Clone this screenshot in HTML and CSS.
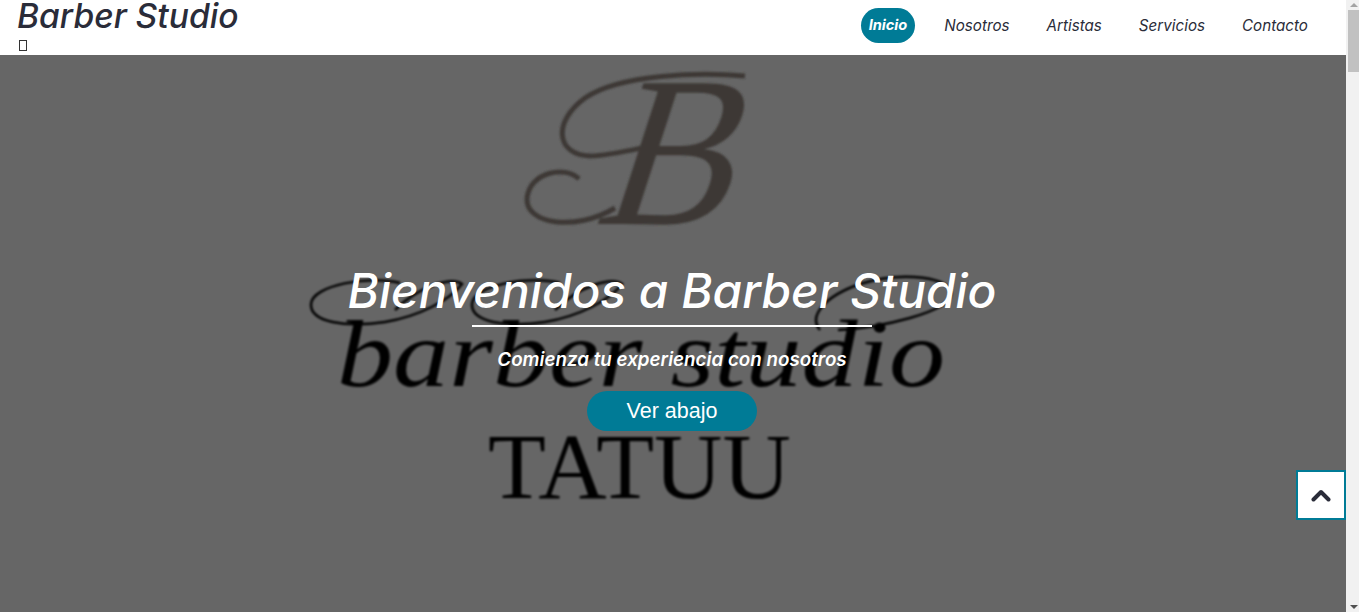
FILE: index.html
```html
<!DOCTYPE html>
<html lang="es">
<head>
    <meta charset="UTF-8" />
    <meta name="viewport" content="width=device-width, initial-scale=1.0" />
    <title>Barber Studio</title>
    <link rel="stylesheet" href="styles.css">
</head>
<body>
    <div class="page">
        <div class="navbar">
            <div class="brand">
                <h1>Barber Studio</h1>
                <span class="missing-icon"></span>
            </div>
            <ul class="menu">
                <li><a class="active" href="#inicio">Inicio</a></li>
                <li><a href="#nosotros">Nosotros</a></li>
                <li><a href="#artistas">Artistas</a></li>
                <li><a href="#servicios">Servicios</a></li>
                <li><a href="#contacto">Contacto</a></li>
            </ul>
        </div>

        <div class="hero" id="inicio">
            <!-- logo del estudio, detras del texto -->
            <svg class="hero-logo" width="1346" height="557" viewBox="0 55 1346 557">
                <defs>
                    <filter id="soft"><feGaussianBlur stdDeviation="0.8" /></filter>
                </defs>
                <g filter="url(#soft)">
                    <text class="logo-b" transform="translate(592 224) skewX(-18)" textLength="135" lengthAdjust="spacingAndGlyphs">B</text>
                    <path class="swash-b" d="M745 76C700 72 620 74 585 98C552 122 556 155 590 156C606 156 632 150 646 147" />
                    <path class="swash-b" d="M579 179C565 165 530 172 527 198C525 224 575 232 615 208" />
                    <g class="swash">
                        <path d="M400 283C370 275 312 285 311 304C310 322 345 328 385 322C420 316 450 300 462 284C452 277 420 285 395 310" />
                        <path d="M560 283C530 275 473 285 472 304C471 322 505 328 545 322C580 316 610 300 622 284C612 277 580 285 555 310" />
                        <path d="M838 330C880 328 950 312 951 294C952 278 905 270 860 284C825 296 808 316 820 330" />
                    </g>
                    <text class="logo-name" x="337" y="386" textLength="608" lengthAdjust="spacingAndGlyphs">barber studio</text>
                    <text class="logo-sub" x="488" y="498" textLength="303" lengthAdjust="spacingAndGlyphs">TATUU</text>
                </g>
            </svg>

            <div class="hero-content">
                <h2>Bienvenidos a Barber Studio</h2>
                <div class="hero-line"></div>
                <p>Comienza tu experiencia con nosotros</p>
                <a class="hero-button" href="#nosotros">Ver abajo</a>
            </div>

            <a class="to-top" href="#inicio">
                <svg width="20" height="13" viewBox="0 0 20 13">
                    <path d="M2.5 10.5L10 3l7.5 7.5" />
                </svg>
            </a>
        </div>
    </div>

    <div class="scrollbar">
        <span class="arrow-up"></span>
        <div class="thumb"></div>
        <span class="arrow-down"></span>
    </div>
</body>
</html>
```

FILE: styles.css
```css
* {
    box-sizing: border-box;
    margin: 0;
    padding: 0;
}

html,
body {
    height: 100%;
    overflow: hidden;
}

body {
    display: flex;
    font-family: "Inter", "Liberation Sans", sans-serif;
    font-style: italic;
    color: #2a2c39;
    background: #fff;
}

.page {
    flex-grow: 1;
    display: flex;
    flex-direction: column;
    min-width: 0;
}

.navbar {
    height: 55px;
    flex-shrink: 0;
    display: flex;
    justify-content: space-between;
    align-items: flex-start;
    padding: 0 30px 0 17px;
    background: #fff;
}

.brand h1 {
    font-size: 33.6px;
    font-weight: 500;
    line-height: 32px;
}

.missing-icon {
    display: block;
    width: 8px;
    height: 11px;
    margin: 8px 0 0 2px;
    border: 1px solid #333;
}

.menu {
    display: flex;
    gap: 21px;
    list-style: none;
    margin-top: 8px;
}

.menu a {
    display: block;
    height: 35px;
    padding: 0 8px;
    line-height: 35px;
    font-size: 15.2px;
    color: #2a2c39;
    text-decoration: none;
}

.menu a.active {
    background: #007b96;
    border-radius: 18px;
    color: #fff;
    font-size: 14.6px;
    font-weight: 700;
}

.hero {
    position: relative;
    flex-grow: 1;
    background: #666;
    overflow: hidden;
}

.hero-logo {
    position: absolute;
    top: 0;
    left: 0;
}

.logo-b {
    font-family: "Liberation Serif", serif;
    font-size: 215px;
    font-style: normal;
    fill: #3c3936;
}

.swash-b {
    fill: none;
    stroke: #3c3936;
    stroke-width: 5;
}

.swash path {
    fill: none;
    stroke: #000;
    stroke-width: 2.5;
}

.logo-name {
    font-family: "Liberation Serif", serif;
    font-size: 96px;
    font-style: italic;
    fill: #000;
}

.logo-sub {
    font-family: "Liberation Serif", serif;
    font-size: 94px;
    font-style: normal;
    fill: #000;
}

.hero-content {
    position: relative;
    display: flex;
    flex-direction: column;
    align-items: center;
    padding: 206px 2px 0 0;
    color: #fff;
}

.hero-content h2 {
    font-size: 47.8px;
    font-weight: 500;
    line-height: 60px;
}

.hero-line {
    width: 400px;
    height: 2px;
    margin-top: 4px;
    background: #fff;
}

.hero-content p {
    margin-top: 21px;
    font-size: 18.8px;
    font-weight: 600;
    line-height: 24px;
}

.hero-button {
    width: 170px;
    height: 40px;
    margin-top: 19px;
    background: #007b96;
    border-radius: 20px;
    font-family: "Liberation Sans", Arial, sans-serif;
    font-size: 21.5px;
    font-style: normal;
    line-height: 40px;
    text-align: center;
    color: #fff;
    text-decoration: none;
}

.to-top {
    position: absolute;
    right: 0;
    bottom: 92px;
    display: flex;
    justify-content: center;
    align-items: center;
    width: 50px;
    height: 50px;
    background: #fff;
    border: 2px solid #007b96;
}

.to-top path {
    fill: none;
    stroke: #2a2c39;
    stroke-width: 4;
    stroke-linecap: round;
    stroke-linejoin: round;
}

.scrollbar {
    width: 13px;
    flex-shrink: 0;
    display: flex;
    flex-direction: column;
    align-items: center;
    background: #f1f1f1;
}

.thumb {
    width: 11px;
    height: 62px;
    margin: 3px 0 0 2px;
    background: #c1c1c1;
}

.arrow-up,
.arrow-down {
    width: 0;
    height: 0;
    margin-left: 2px;
    border-left: 4px solid transparent;
    border-right: 4px solid transparent;
}

.arrow-up {
    margin-top: 3px;
    border-bottom: 4px solid #a3a3a3;
}

.arrow-down {
    margin-top: auto;
    margin-bottom: 3px;
    border-top: 4px solid #505050;
}
```
